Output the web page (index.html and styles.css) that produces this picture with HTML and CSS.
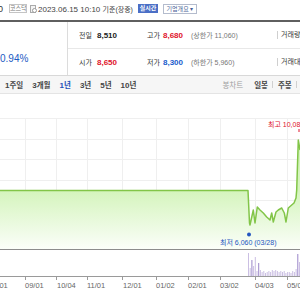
FILE: index.html
```html
<!DOCTYPE html>
<html lang="ko">
<head>
  <meta charset="UTF-8"/>
  <meta name="viewport" content="width=device-width,initial-scale=1"/>
  <title>시세 – 차트</title>
  <link rel="stylesheet" href="styles.css">
</head>
<body>

  <div class="top">
    <span class="code">0</span>
    <span class="market">코스닥</span>
    <svg class="clock" width="7" height="8" viewBox="0 0 7 8">
      <rect x="0.5" y="0.5" width="5" height="7" fill="#f4f4f4" stroke="#aaa"/>
      <circle cx="4.5" cy="5.5" r="2" fill="#fff" stroke="#999"/>
    </svg>
    <span class="date">2023.06.15 10:10 <span class="k">기준(장중)</span></span>
    <span class="live">실시간</span>
    <span class="overview">기업개요 ▾</span>
  </div>

  <div class="info">
    <div class="rate">0.94%</div>
    <div class="rows">
      <div class="row">
        <span class="lb">전일</span><b class="val">8,510</b>
        <span class="lb">고가</span><b class="val up">8,680</b><span class="sub">(<span class="k">상한가</span> 11,060)</span>
        <span class="more lb">거래량</span>
      </div>
      <div class="row">
        <span class="lb">시가</span><b class="val up">8,650</b>
        <span class="lb">저가</span><b class="val dn">8,300</b><span class="sub">(<span class="k">하한가</span> 5,960)</span>
        <span class="more lb">거래대금</span>
      </div>
    </div>
  </div>

  <div class="tabs">
    <span>1<span class="k">주일</span></span><i></i>
    <span>3<span class="k">개월</span></span><i></i>
    <span class="on">1<span class="k">년</span></span><i></i>
    <span>3<span class="k">년</span></span><i></i>
    <span>5<span class="k">년</span></span><i></i>
    <span>10<span class="k">년</span></span>
    <div class="kind">
      <span class="off k">봉차트</span>
      <span class="k">일봉</span><i></i>
      <span class="k">주봉</span><i></i>
      <span class="k">월봉</span>
    </div>
  </div>

  <svg class="chart" width="300" height="206" viewBox="0 94 300 206">
    <defs>
      <linearGradient id="fillGrad" gradientUnits="userSpaceOnUse" x1="0" y1="190" x2="0" y2="249">
        <stop offset="0" stop-color="#d4f4bc"/>
        <stop offset="1" stop-color="#fbfef9"/>
      </linearGradient>
    </defs>
    <!-- grid -->
    <g stroke="#efefef" stroke-width="1">
      <line x1="0" y1="118.5" x2="300" y2="118.5"/>
      <line x1="0" y1="139.5" x2="300" y2="139.5"/>
      <line x1="0" y1="159.5" x2="300" y2="159.5"/>
      <line x1="0" y1="180.5" x2="300" y2="180.5"/>
      <line x1="0" y1="200.5" x2="300" y2="200.5"/>
      <line x1="0" y1="221.5" x2="300" y2="221.5"/>
      <line x1="0" y1="241.5" x2="300" y2="241.5"/>
      <line x1="25.5" y1="118" x2="25.5" y2="249"/>
      <line x1="56.5" y1="118" x2="56.5" y2="249"/>
      <line x1="87.5" y1="118" x2="87.5" y2="249"/>
      <line x1="122.5" y1="118" x2="122.5" y2="249"/>
      <line x1="156.5" y1="118" x2="156.5" y2="249"/>
      <line x1="188.5" y1="118" x2="188.5" y2="249"/>
      <line x1="220.5" y1="118" x2="220.5" y2="249"/>
      <line x1="255.5" y1="118" x2="255.5" y2="249"/>
      <line x1="287.5" y1="118" x2="287.5" y2="249"/>
    </g>
    <!-- price -->
    <path fill="url(#fillGrad)" d="M0,190.5 L248,190.5 L249.5,223 L250,225 L253.3,210 L255,223 L257.3,207 L260,210 L263.3,213 L266.7,217 L270,220 L271.7,213 L273.3,222 L276,212 L278.3,210 L281.7,208 L284.3,213 L286,222 L288.3,208 L291.7,205 L294,203 L296,198 L296.7,190 L298.3,140 L300,150 L300,249 L0,249 Z"/>
    <path fill="none" stroke="#82c548" stroke-width="1.5" stroke-linejoin="round" d="M0,190.5 L248,190.5 L249.5,223 L250,225 L253.3,210 L255,223 L257.3,207 L260,210 L263.3,213 L266.7,217 L270,220 L271.7,213 L273.3,222 L276,212 L278.3,210 L281.7,208 L284.3,213 L286,222 L288.3,208 L291.7,205 L294,203 L296,198 L296.7,190 L298.3,140 L300,150"/>
    <text class="hi" x="268" y="127">최고 10,080</text>
    <line x1="299" y1="129" x2="299" y2="132" stroke="#e0142c" stroke-width="1"/>
    <circle cx="249" cy="234.5" r="2" fill="#2455c0"/>
    <text class="lo" x="220" y="245">최저 6,060 (03/28)</text>
    <line x1="0" y1="249.5" x2="300" y2="249.5" stroke="#8c8c8c"/>
    <!-- volume -->
    <g fill="#cbbfe3">
      <rect x="248" y="253" width="1" height="23"/>
      <rect x="249.7" y="268" width="1" height="8"/>
      <rect x="253.1" y="266" width="1" height="10"/>
      <rect x="254.8" y="257" width="1" height="19"/>
      <rect x="256.5" y="271" width="1" height="5"/>
      <rect x="259.9" y="270" width="1" height="6"/>
      <rect x="261.6" y="272" width="1" height="4"/>
      <rect x="263.3" y="271" width="1" height="5"/>
      <rect x="265" y="273" width="1" height="3"/>
      <rect x="266.7" y="272" width="1" height="4"/>
      <rect x="268.4" y="271" width="1" height="5"/>
      <rect x="270.1" y="272" width="1" height="4"/>
      <rect x="271.8" y="270" width="1" height="6"/>
      <rect x="273.5" y="271" width="1" height="5"/>
      <rect x="275.2" y="270" width="1" height="6"/>
      <rect x="276.9" y="271" width="1" height="5"/>
      <rect x="278.6" y="272" width="1" height="4"/>
      <rect x="280.3" y="271" width="1" height="5"/>
      <rect x="282" y="272" width="1" height="4"/>
      <rect x="283.7" y="271" width="1" height="5"/>
      <rect x="285.4" y="273" width="1" height="3"/>
      <rect x="287.1" y="272" width="1" height="4"/>
      <rect x="288.8" y="272" width="1" height="4"/>
      <rect x="290.5" y="273" width="1" height="3"/>
      <rect x="292.2" y="271" width="1" height="5"/>
      <rect x="293.9" y="272" width="1" height="4"/>
      <rect x="295.6" y="269" width="1" height="7"/>
      <rect x="299" y="262" width="1" height="14"/>
    </g>
    <g fill="#9b86c9">
      <rect x="251.4" y="260" width="1" height="16"/>
      <rect x="258.2" y="263" width="1" height="13"/>
      <rect x="297.3" y="254" width="1" height="22"/>
    </g>
    <!-- axis -->
    <line x1="0" y1="276.5" x2="300" y2="276.5" stroke="#9a9a9a"/>
    <g stroke="#9a9a9a">
      <line x1="25.5" y1="277" x2="25.5" y2="280"/>
      <line x1="56.5" y1="277" x2="56.5" y2="280"/>
      <line x1="87.5" y1="277" x2="87.5" y2="280"/>
      <line x1="122.5" y1="277" x2="122.5" y2="280"/>
      <line x1="156.5" y1="277" x2="156.5" y2="280"/>
      <line x1="188.5" y1="277" x2="188.5" y2="280"/>
      <line x1="220.5" y1="277" x2="220.5" y2="280"/>
      <line x1="255.5" y1="277" x2="255.5" y2="280"/>
      <line x1="287.5" y1="277" x2="287.5" y2="280"/>
    </g>
    <g class="dates">
      <text x="-11" y="288">08/01</text>
      <text x="25" y="288">09/01</text>
      <text x="57" y="288">10/04</text>
      <text x="87" y="288">11/01</text>
      <text x="123" y="288">12/01</text>
      <text x="156" y="288">01/02</text>
      <text x="188" y="288">02/01</text>
      <text x="220" y="288">03/02</text>
      <text x="255" y="288">04/03</text>
      <text x="287" y="288">05/02</text>
    </g>
  </svg>

</body>
</html>
```

FILE: styles.css
```css
*{box-sizing:border-box;margin:0;padding:0}
body{width:300px;height:300px;overflow:hidden;background:#fff;color:#333;font-family:'Liberation Sans','Noto Sans CJK KR',sans-serif;font-size:8px}
.k{font-size:7px}

.top{height:20px;display:flex;align-items:center;white-space:nowrap;padding-bottom:3px}
.top .code{margin-left:-2px;width:11px;font-size:9px}
.market{width:18px;height:9px;border:1px solid #c4c4c4;font-size:6px;line-height:7px;color:#777;text-align:center;overflow:hidden}
.clock{margin-left:3px;display:block}
.date{margin-left:1px;color:#444}
.live{margin-left:5px;width:20px;height:9px;background:#4b6fc6;color:#fff;font-size:6px;font-weight:bold;line-height:9px;text-align:center}
.overview{margin-left:5px;width:34px;height:10px;border:1px solid #b4bccd;font-size:6px;line-height:8px;color:#4a5f96;text-align:center}

.info{display:flex;height:55px;border-top:2px solid #5f5f5f}
.rate{width:68px;border-right:1px solid #dcdcdc;padding-top:31px;font-size:10px;line-height:12px;color:#1c5bc4}
.rows{flex:1}
.row{height:26px;display:grid;grid-template-columns:18px 50px 16px 28px 86px auto;align-items:center;padding-left:11px;white-space:nowrap}
.row:first-child{height:27px;border-bottom:1px solid #e8e8e8}
.lb{font-size:7px;color:#333}
.val{font-size:8px;color:#222}
.up{color:#e0142c}
.dn{color:#1a5ccc}
.sub{font-size:7px;color:#777}
.more{border-left:1px solid #cfcfcf;padding-left:3px;line-height:8px;overflow:hidden}

.tabs{height:19px;display:flex;align-items:center;padding-left:5px;background:#f6f6f6;border-top:1px solid #d8d8d8;border-bottom:1px solid #e4e4e4;white-space:nowrap;font-weight:bold;color:#444}
.tabs .k{font-size:7.5px}
.tabs i{width:1px;height:7px;background:#d0d0d0;margin:0 4.5px}
.tabs .on{color:#1d4fb8}
.kind{display:flex;align-items:center;margin-left:86px;flex-shrink:0}
.kind .off{font-weight:normal;color:#a0a0a0;margin-right:11px}

.chart{display:block}
.chart text{font-family:'Liberation Sans','Noto Sans CJK KR',sans-serif}
.hi{font-size:7px;fill:#e0142c}
.lo{font-size:7px;fill:#2455c0}
.dates{font-size:7.5px;fill:#666}
```
